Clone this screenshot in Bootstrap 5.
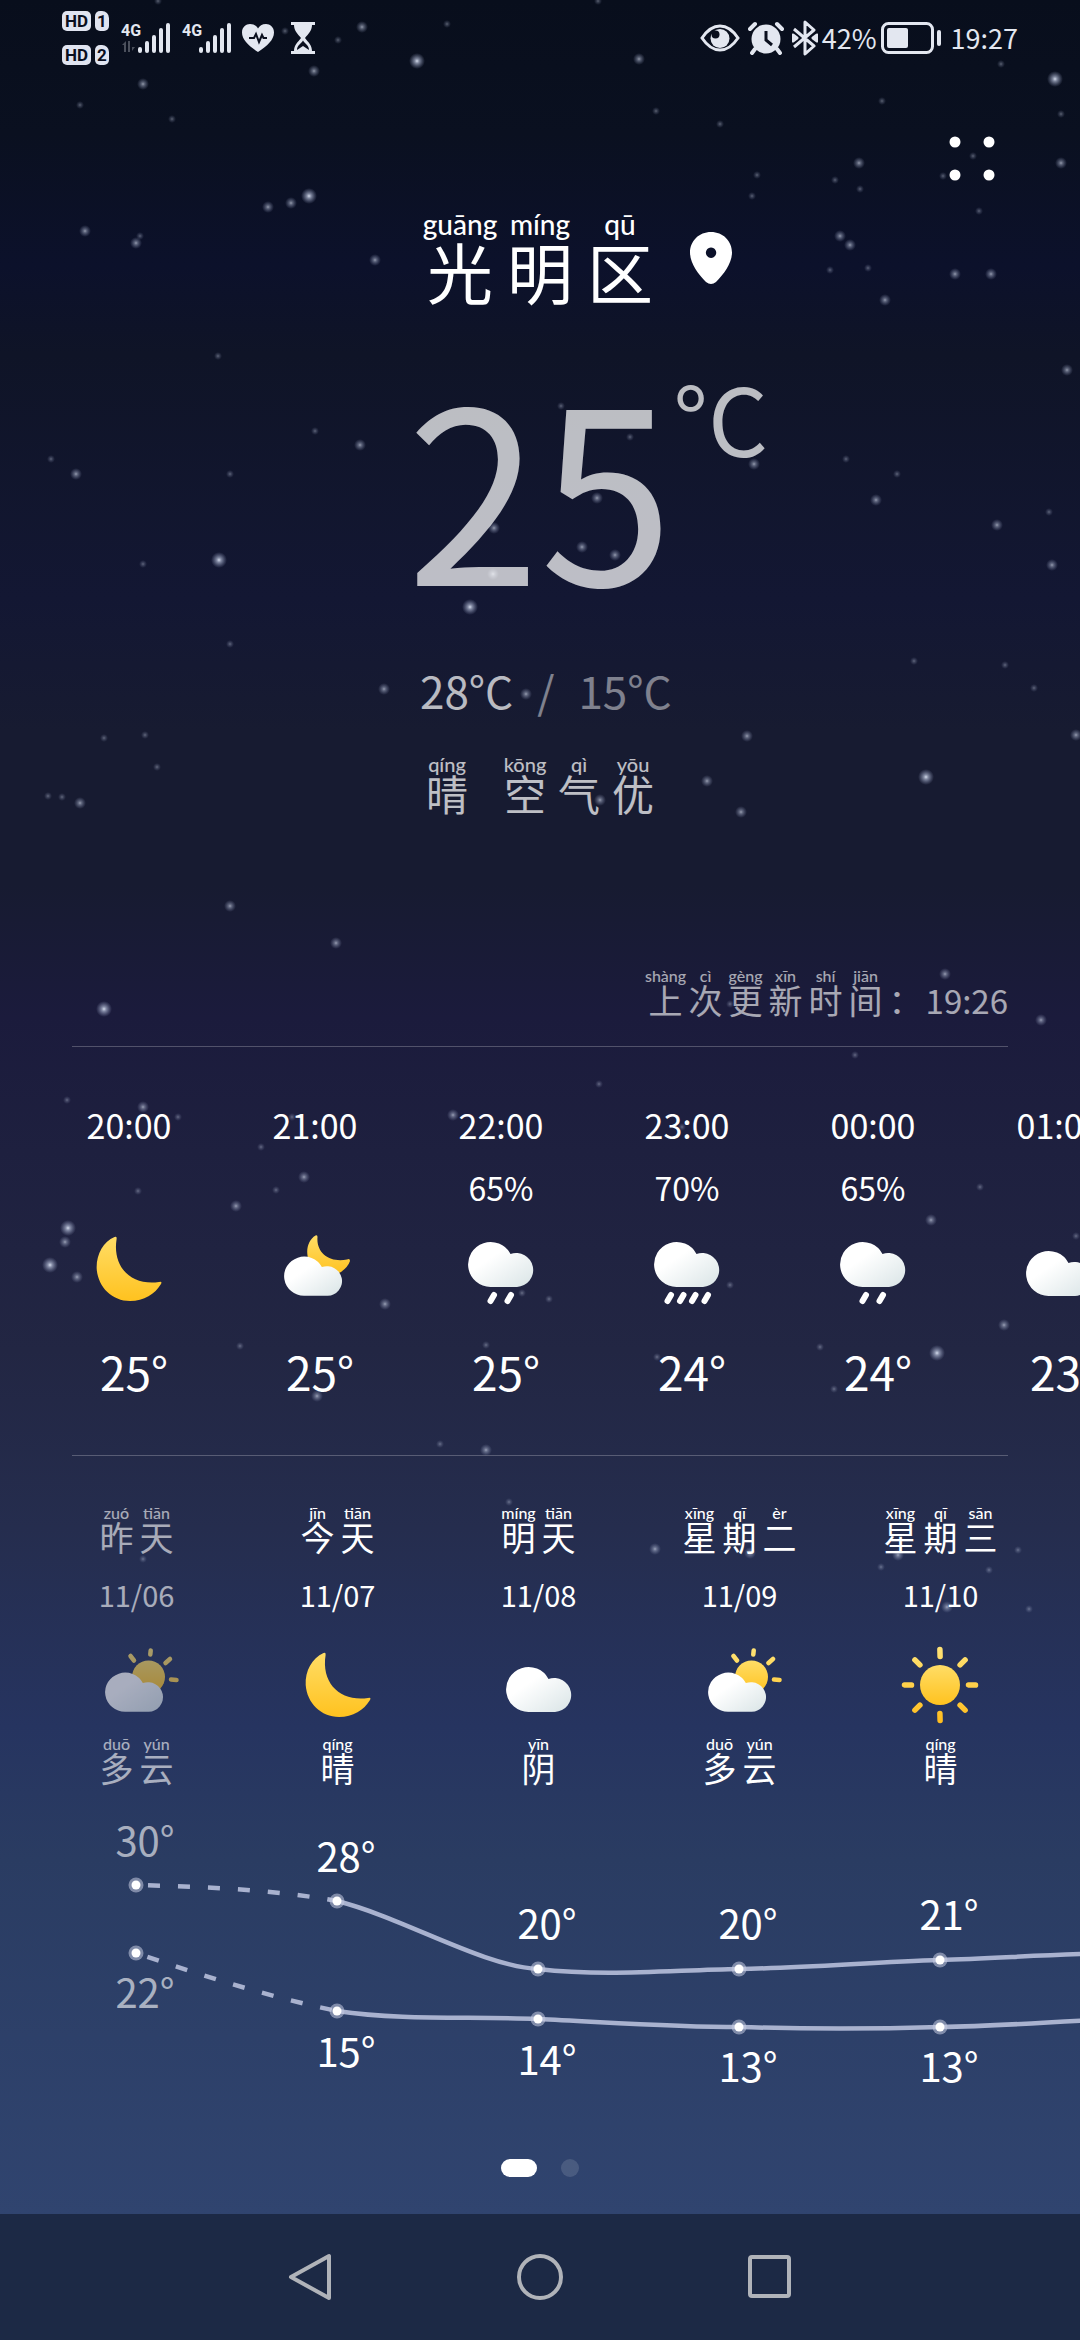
<!DOCTYPE html>
<html lang="zh-CN">
<head>
<meta charset="utf-8">
<meta name="viewport" content="width=device-width, initial-scale=1">
<title>光明区 天气</title>
<link rel="stylesheet" href="https://cdn.jsdelivr.net/npm/bootstrap@5.3.0/dist/css/bootstrap.min.css">
<script src="https://cdn.jsdelivr.net/npm/bootstrap@5.3.0/dist/js/bootstrap.bundle.min.js"></script>
<style>
  body { font-family: "Noto Sans CJK SC", sans-serif; color: #fff; background: #1c2945; }
  .sky { background: linear-gradient(#080e1c 0, #0a1020 6%, #0c112b 12%, #0f1427 16%, #131733 27%, #171b31 33%, #171b31 40%, #1b1b3c 46%, #1e203f 52%, #222643 61%, #252d4e 69%, #263460 78%, #2a3c62 84%, #2d4069 92%, #30446f 100%); overflow: hidden; }
  .starfield { position: absolute; inset: 0; pointer-events: none; }
  .status { height: 76px; padding: 0 62px; color: #e3e7f0; font-size: 27px; line-height: 40px; }
  .tags { gap: 14px; }
  .tag-hd, .tag-sim { background: #e0e4f0; color: #0a0f1e; border-radius: 5px; font-family: Roboto, sans-serif; font-weight: 700; font-size: 17px; line-height: 20px; text-align: center; }
  .tag-hd { width: 29px; }
  .tag-sim { width: 14px; border-top-right-radius: 7px; }
  .net { font-family: Roboto, sans-serif; font-size: 16px; font-weight: 700; }
  .menu-row { padding: 54px 80px 0 0; }
  .plain-btn { background: none; border: 0; padding: 0; color: inherit; display: block; }
  .three { display: grid; grid-template-columns: 1fr auto 1fr; }
  .hanzi { display: flex; flex-direction: column; align-items: center; white-space: nowrap; width: 40px; font-size: 34px; line-height: 32px; }
  .hanzi i { font-family: Lato, sans-serif; font-style: normal; font-weight: 500; font-size: 16px; line-height: 16px; }
  .city { margin-top: 22px; }
  .city .hanzi { width: 80px; font-size: 66px; line-height: 60px; }
  .city .hanzi i { font-size: 28px; line-height: 32px; }
  .pin { margin: 24px 0 0 30px; }
  .now { margin-top: 64px; opacity: .72; font-size: 240px; line-height: 236px; }
  .unit { font-size: 94px; line-height: 104px; }
  .range { margin-top: 62px; font-size: 44px; line-height: 56px; padding-left: 420px; }
  .dim { opacity: .7; }
  .faint { opacity: .45; }
  .summary { margin-top: 36px; padding-left: 420px; opacity: .72; }
  .summary .hanzi { width: 54px; font-size: 42px; line-height: 38px; }
  .summary .hanzi i { font-size: 20px; line-height: 20px; }
  .updated { margin-top: 156px; padding: 0 72px; opacity: .62; font-size: 33px; line-height: 32px; }
  .rule { height: 1px; margin: 0 72px; background: rgba(255,255,255,.24); }
  .updated + .rule { margin-top: 30px; }
  .hours { padding: 58px 0 59px 36px; }
  .hour { flex: 0 0 186px; font-size: 34px; line-height: 40px; }
  .rain-chance { height: 40px; margin: 22px 0 23px; font-size: 32px; }
  .glyph { width: 80px; height: 80px; overflow: visible; display: block; }
  .hour-temp { font-size: 46px; line-height: 50px; margin-top: 36px; padding-left: 10px; }
  .days { padding: 49px 0 0 36px; }
  .day { flex: 0 0 201px; }
  .date { font-size: 29px; line-height: 40px; margin: 21px 0 32px; }
  .cond { margin-top: 10px; }
  .past { opacity: .6; }
  .trend { height: 310px; margin-top: 16px; display: block; font-size: 40px; }
  .pager { margin-top: 49px; gap: 24px; padding-bottom: 37px; }
  .dot-on { width: 36px; height: 18px; border-radius: 9px; background: #fff; }
  .dot-off { width: 18px; height: 18px; border-radius: 50%; background: rgba(255,255,255,.13); }
  .keys { height: 126px; gap: 184px; color: #b0b3b9; }
</style>
</head>
<body class="min-vh-100 d-flex flex-column">

<svg width="0" height="0" class="position-absolute" aria-hidden="true">
  <defs>
    <radialGradient id="glow"><stop offset="0" stop-color="#dfe6f5"/><stop offset=".3" stop-color="#b4bdd6" stop-opacity=".7"/><stop offset="1" stop-color="#8a94b8" stop-opacity="0"/></radialGradient>
    <linearGradient id="gold" x1="0" y1="0" x2="0" y2="1"><stop offset="0" stop-color="#ffdd66"/><stop offset="1" stop-color="#ffc21f"/></linearGradient>
    <linearGradient id="goldRay" gradientUnits="userSpaceOnUse" x1="0" y1="0" x2="0" y2="78"><stop offset="0" stop-color="#ffe478"/><stop offset="1" stop-color="#ffbc1c"/></linearGradient>
    <linearGradient id="fluff" x1="0" y1="0" x2="1" y2="1"><stop offset=".35" stop-color="#fff"/><stop offset="1" stop-color="#d9e4e6"/></linearGradient>
    <path id="puff" fill="url(#fluff)" d="M29.500 57A22.500 22.500 0 1 1 49.500 24A17 17 0 1 1 56 57Z"/>
    <symbol id="w-moon" viewBox="0 0 80 80"><path fill="url(#gold)" d="M25.500 7C14 12 7 25 7.700 39C9 57 23 71 41 71C55 71 66 64 72 54Q73.500 51 70 52C43 56 23 38 27.600 9Q28 6 25.500 7Z"/></symbol>
    <symbol id="w-cloud" viewBox="0 0 80 80"><use href="#puff" y="9"/></symbol>
    <symbol id="w-cloudmoon" viewBox="0 0 80 80"><path fill="url(#gold)" d="M40.500 5.500C33 10 30 21 34 31C42 48 60 46 66 42Q73 37 75 31Q75 28 72 29.500C56 33 41 24 42.500 7Q42.500 4.500 40.500 5.500Z"/><use href="#puff" transform="translate(2.800 16.200) scale(.89 .87)"/></symbol>
    <symbol id="w-rain" viewBox="0 0 80 80"><use href="#puff"/><path d="M33 65L29.500 71M50 65L46.500 71" stroke="#fff" stroke-width="6" stroke-linecap="round"/></symbol>
    <symbol id="w-heavy" viewBox="0 0 80 80"><use href="#puff"/><path d="M24 65L20.500 71M36.500 65L33 71M48.500 65L45 71M61 65L57.500 71" stroke="#fff" stroke-width="6" stroke-linecap="round"/></symbol>
    <symbol id="w-cloudsun" viewBox="0 0 80 80" overflow="visible"><circle cx="51.500" cy="31" r="16.500" fill="url(#gold)"/><path d="M53.700 4.500L53.300 8.500M33.500 10L37 14.500M73 13L68.500 17M74 33.500L79.500 34" stroke="url(#goldRay)" stroke-width="4.500" stroke-linecap="round"/><use href="#puff" transform="translate(1.800 16.200) scale(.89 .87)"/></symbol>
    <symbol id="w-sun" viewBox="0 0 80 80"><circle cx="39" cy="39" r="20" fill="url(#gold)"/><path d="M38.900 3.500L39.100 10.500M38.900 67.500L39.100 74.500M3.500 38.900L10.500 39.100M67.500 38.900L74.500 39.100M13.900 13.900L18.900 18.900M64.100 13.900L59.100 18.900M13.900 64.100L18.900 59.100M64.100 64.100L59.100 59.100" stroke="url(#goldRay)" stroke-width="5.500" stroke-linecap="round"/></symbol>
  </defs>
</svg>

<main class="sky position-relative flex-grow-1">
  <svg class="starfield w-100 h-100" id="stars" aria-hidden="true"></svg>

  <header class="status d-flex align-items-center position-relative">
    <div class="tags d-flex flex-column me-1">
      <div class="d-flex gap-1"><span class="tag-hd">HD</span><span class="tag-sim">1</span></div>
      <div class="d-flex gap-1"><span class="tag-hd">HD</span><span class="tag-sim">2</span></div>
    </div>
    <svg class="ms-2" width="51" height="32" viewBox="0 0 51 32" fill="currentColor" aria-label="4G">
      <text class="net" x="0" y="14">4G</text><path d="M5 19v11h-2v-7h-2zM7 19h2v11h-2zM11 19v10l3-4h-3z" opacity=".3"/>
      <g stroke="currentColor" stroke-width="4" stroke-linecap="round"><path d="M19 27v2M26 21v8M33 15v14M40 8v21M47 3v26"/></g>
    </svg>
    <svg class="ms-2" width="53" height="32" viewBox="-2 0 53 32" fill="currentColor" aria-label="4G">
      <text class="net" x="0" y="14">4G</text>
      <g stroke="currentColor" stroke-width="4" stroke-linecap="round"><path d="M19 27v2M26 21v8M33 15v14M40 8v21M47 3v26"/></g>
    </svg>
    <svg class="ms-2" width="34" height="30" viewBox="0 0 34 30"><path fill="currentColor" d="M17 29C8 23 1 17 1 9.500C1 4 5 1 9 1C13 1 15.500 3 17 5.500C18.500 3 21 1 25 1C29 1 33 4 33 9.500C33 17 26 23 17 29Z"/><path d="M8 15h5l2-4 3 8 3-7 1.500 3H26" fill="none" stroke="#0a0f1e" stroke-width="2"/></svg>
    <svg class="ms-3 me-auto" width="24" height="32" viewBox="0 0 24 32"><path fill="currentColor" d="M0 0h24v3H0zM3 3h18c0 6-4 9-7 13c3 4 7 7 7 13H3c0-6 4-9 7-13C7 12 3 9 3 3zM0 29h24v3H0z"/><path d="M6 28c0-5 4-6 6-9.500c2 3.500 6 4.500 6 9.500l-6-4z" fill="#0a0f1e"/></svg>

    <svg width="40" height="28" viewBox="0 0 40 28"><path d="M2 14C8 5 14 2 20 2S32 5 38 14C32 23 26 26 20 26S8 23 2 14Z" fill="none" stroke="currentColor" stroke-width="3"/><circle cx="20" cy="14.500" r="9.500" fill="currentColor"/><circle cx="15.500" cy="10.500" r="4" fill="#0a0f1e"/></svg>
    <svg class="ms-2" width="36" height="34" viewBox="0 0 36 34"><circle cx="18" cy="18" r="14.500" fill="currentColor"/><path d="M2 8l5-5M34 8l-5-5M7 28l-3 4M29 28l3 4" stroke="currentColor" stroke-width="4" stroke-linecap="round"/><path d="M18 10v9l6 5" fill="none" stroke="#0a0f1e" stroke-width="3"/></svg>
    <svg class="ms-2" width="26" height="36" viewBox="0 0 26 36" fill="none" stroke="currentColor" stroke-width="3"><path d="M2 9L22 26L13 34V2L22 10L2 27M1 15v6l4-3zM25 15v6l-4-3z" stroke-linejoin="round"/></svg>
    <span class="ms-1">42%</span>
    <svg class="ms-1" width="62" height="32" viewBox="0 0 62 32"><rect x="1.500" y="1.500" width="50" height="29" rx="6" fill="none" stroke="currentColor" stroke-width="3"/><rect x="6" y="6" width="21" height="20" rx="2" fill="currentColor"/><rect x="56" y="8" width="4" height="16" rx="2" fill="currentColor"/></svg>
    <time class="ms-2">19:27</time>
  </header>

  <div class="menu-row d-flex justify-content-end position-relative">
    <button class="plain-btn" type="button" aria-label="更多"><svg class="d-block" width="56" height="56" viewBox="0 0 56 56" fill="#fff"><circle cx="11" cy="12" r="5.500"/><circle cx="45" cy="12" r="5.500"/><circle cx="11" cy="45" r="5.500"/><circle cx="45" cy="45" r="5.500"/></svg></button>
  </div>

  <div class="city three position-relative">
    <span></span>
    <h1 class="m-0 d-flex fw-normal"><span class="hanzi"><i>guāng</i>光</span><span class="hanzi"><i>míng</i>明</span><span class="hanzi"><i>qū</i>区</span></h1>
    <svg class="pin" width="42" height="52" viewBox="0 0 42 52"><path fill="#fff" fill-rule="evenodd" d="M21 0C33 0 42 9 42 20.500C42 31 34 42 26 50Q21 54 16 50C8 42 0 31 0 20.500C0 9 9 0 21 0ZM21 15.500a5.200 5.200 0 1 0 .1 0Z"/></svg>
  </div>

  <div class="now three position-relative">
    <span></span><span>25</span><span class="unit">°C</span>
  </div>

  <div class="range d-flex position-relative"><span class="dim">28°C</span><span class="faint ms-4">/</span><span class="faint ms-4">15°C</span></div>

  <div class="summary d-flex position-relative"><span class="hanzi me-4"><i>qíng</i>晴</span><span class="hanzi"><i>kōng</i>空</span><span class="hanzi"><i>qì</i>气</span><span class="hanzi"><i>yōu</i>优</span></div>

  <div class="updated d-flex justify-content-end align-items-end position-relative">
    <span class="hanzi"><i>shàng</i>上</span><span class="hanzi"><i>cì</i>次</span><span class="hanzi"><i>gèng</i>更</span><span class="hanzi"><i>xīn</i>新</span><span class="hanzi"><i>shí</i>时</span><span class="hanzi"><i>jiān</i>间</span><span class="hanzi">：</span><time>19:26</time>
  </div>
  <div class="rule"></div>

  <ul class="hours list-unstyled d-flex m-0 text-center position-relative">
    <li class="hour"><div>20:00</div><div class="rain-chance"></div><svg class="glyph mx-auto"><use href="#w-moon"/></svg><div class="hour-temp">25°</div></li>
    <li class="hour"><div>21:00</div><div class="rain-chance"></div><svg class="glyph mx-auto"><use href="#w-cloudmoon"/></svg><div class="hour-temp">25°</div></li>
    <li class="hour"><div>22:00</div><div class="rain-chance">65%</div><svg class="glyph mx-auto"><use href="#w-rain"/></svg><div class="hour-temp">25°</div></li>
    <li class="hour"><div>23:00</div><div class="rain-chance">70%</div><svg class="glyph mx-auto"><use href="#w-heavy"/></svg><div class="hour-temp">24°</div></li>
    <li class="hour"><div>00:00</div><div class="rain-chance">65%</div><svg class="glyph mx-auto"><use href="#w-rain"/></svg><div class="hour-temp">24°</div></li>
    <li class="hour"><div>01:00</div><div class="rain-chance"></div><svg class="glyph mx-auto"><use href="#w-cloud"/></svg><div class="hour-temp">23°</div></li>
  </ul>
  <div class="rule"></div>

  <ul class="days list-unstyled d-flex m-0 text-center position-relative">
    <li class="day past"><div class="d-flex justify-content-center"><span class="hanzi"><i>zuó</i>昨</span><span class="hanzi"><i>tiān</i>天</span></div><div class="date">11/06</div><svg class="glyph mx-auto"><use href="#w-cloudsun"/></svg><div class="cond d-flex justify-content-center"><span class="hanzi"><i>duō</i>多</span><span class="hanzi"><i>yún</i>云</span></div></li>
    <li class="day"><div class="d-flex justify-content-center"><span class="hanzi"><i>jīn</i>今</span><span class="hanzi"><i>tiān</i>天</span></div><div class="date">11/07</div><svg class="glyph mx-auto"><use href="#w-moon"/></svg><div class="cond d-flex justify-content-center"><span class="hanzi"><i>qíng</i>晴</span></div></li>
    <li class="day"><div class="d-flex justify-content-center"><span class="hanzi"><i>míng</i>明</span><span class="hanzi"><i>tiān</i>天</span></div><div class="date">11/08</div><svg class="glyph mx-auto"><use href="#w-cloud"/></svg><div class="cond d-flex justify-content-center"><span class="hanzi"><i>yīn</i>阴</span></div></li>
    <li class="day"><div class="d-flex justify-content-center"><span class="hanzi"><i>xīng</i>星</span><span class="hanzi"><i>qī</i>期</span><span class="hanzi"><i>èr</i>二</span></div><div class="date">11/09</div><svg class="glyph mx-auto"><use href="#w-cloudsun"/></svg><div class="cond d-flex justify-content-center"><span class="hanzi"><i>duō</i>多</span><span class="hanzi"><i>yún</i>云</span></div></li>
    <li class="day"><div class="d-flex justify-content-center"><span class="hanzi"><i>xīng</i>星</span><span class="hanzi"><i>qī</i>期</span><span class="hanzi"><i>sān</i>三</span></div><div class="date">11/10</div><svg class="glyph mx-auto"><use href="#w-sun"/></svg><div class="cond d-flex justify-content-center"><span class="hanzi"><i>qíng</i>晴</span></div></li>
  </ul>

  <svg class="trend w-100 position-relative" id="trend" fill="none" role="img" aria-label="气温趋势">
    <g stroke="#a9b2cf" stroke-width="4.500">
      <path stroke-dasharray="12 18" stroke-dashoffset="-12" d="M136 85C203 87 270 89 337 101"/>
      <path stroke-dasharray="12 18" stroke-dashoffset="-12" d="M136 153C203 176 270 197 337 211"/>
      <path d="M337 101C404 118 482 166 538 169C605 177 672 170 739 169C806 168 873 162 940 160C1000 158 1060 154 1120 153"/>
      <path d="M337 211C404 221 471 216 538 219C605 222 672 227 739 227C806 229 873 229 940 227C1007 226 1060 221 1120 219"/>
    </g>
  </svg>

  <div class="pager d-flex justify-content-center position-relative"><span class="dot-on"></span><span class="dot-off"></span></div>
</main>

<nav class="keys d-flex justify-content-center align-items-center">
  <button class="plain-btn" type="button" aria-label="返回"><svg class="d-block" width="46" height="50" viewBox="0 0 46 50"><path d="M42 4V46L4 25Z" fill="none" stroke="currentColor" stroke-width="4" stroke-linejoin="round"/></svg></button>
  <button class="plain-btn" type="button" aria-label="主页"><svg class="d-block" width="46" height="50" viewBox="0 0 46 50"><circle cx="23" cy="25" r="21" fill="none" stroke="currentColor" stroke-width="4"/></svg></button>
  <button class="plain-btn" type="button" aria-label="最近任务"><svg class="d-block" width="46" height="50" viewBox="0 0 46 50"><rect x="3" y="5" width="39" height="39" rx="2" fill="none" stroke="currentColor" stroke-width="4"/></svg></button>
</nav>

<script>
  const NS = 'http://www.w3.org/2000/svg';
  const add = (parent, tag, attrs, text) => {
    const el = document.createElementNS(NS, tag);
    for (const k in attrs) el.setAttribute(k, attrs[k]);
    if (text) el.textContent = text;
    parent.appendChild(el);
  };

  // daily points: x, high y, high, high label y, low y, low, low label y
  const days = [
    [136, 85, 30, 56, 153, 22, 208], [337, 101, 28, 72, 211, 15, 267],
    [538, 169, 20, 139, 219, 14, 275], [739, 169, 20, 139, 227, 13, 282],
    [940, 160, 21, 130, 227, 13, 282]
  ];
  const trend = document.getElementById('trend');
  days.forEach(([x, hy, hi, hl, ly, lo, ll], i) => {
    for (const y of [hy, ly]) {
      add(trend, 'circle', { cx: x, cy: y, r: 7.5, fill: '#c4cbe0', 'fill-opacity': .55 });
      add(trend, 'circle', { cx: x, cy: y, r: 4.5, fill: '#fff' });
    }
    const o = i ? 1 : .6;
    add(trend, 'text', { x: x + 9, y: hl, fill: '#fff', 'fill-opacity': o, 'text-anchor': 'middle' }, hi + '°');
    add(trend, 'text', { x: x + 9, y: ll, fill: '#fff', 'fill-opacity': o, 'text-anchor': 'middle' }, lo + '°');
  });

  // stars: x, y, brightness 1-3
  const stars = [
    158,1,1, 285,31,1, 362,27,2, 338,40,1, 447,24,1, 417,61,3, 314,71,2, 143,84,2, 80,105,1, 172,119,1, 598,1,1, 639,59,2,
    1001,64,1, 1055,79,3, 882,101,1, 656,111,1, 720,124,1, 1061,114,1, 859,163,2, 835,180,1, 860,189,1, 973,156,1, 943,176,1,
    1061,163,2, 757,175,1, 752,196,1, 979,211,1, 840,236,2, 850,245,2, 830,270,1, 868,268,1, 955,274,2, 991,274,2, 885,300,2,
    268,207,2, 291,203,2, 309,196,3, 85,231,2, 136,243,2, 140,236,1, 375,260,2, 218,356,1, 315,431,1, 360,445,2, 51,459,1,
    76,474,2, 230,474,1, 219,560,3, 143,564,1, 230,644,1, 1067,370,2, 846,459,1, 876,500,2, 897,474,1, 997,525,2, 1049,512,1,
    1052,565,2, 1005,665,1, 1034,688,1, 1076,735,2, 926,777,3, 914,661,1, 104,738,1, 145,735,1, 157,767,1, 48,796,1, 62,797,1,
    80,803,2, 230,906,2, 336,943,2, 104,1009,3, 561,406,1, 630,437,1, 597,498,2, 494,528,2, 582,547,2, 615,555,2, 470,607,3,
    754,464,2, 493,574,2, 384,689,2, 526,694,2, 747,736,2, 707,781,2, 741,812,2, 600,800,2, 945,974,2, 1041,1020,2, 855,1055,1,
    730,1004,1, 67,1100,1, 143,1107,2, 178,1117,1, 453,1115,2, 292,1117,1, 261,1147,1, 304,1177,2, 276,1190,1, 236,1206,2,
    138,1191,1, 68,1228,3, 65,1242,2, 50,1265,3, 77,1277,2, 385,1304,2, 522,1293,1, 549,1299,1, 240,1346,1, 317,1396,2,
    486,1345,1, 599,1084,1, 682,1127,1, 931,1220,2, 980,1187,1, 1076,1236,1, 730,1285,1, 1004,1325,2, 937,1353,3, 820,1347,1,
    834,1389,1, 657,1357,1, 143,1559,1, 509,1502,1, 523,1604,1, 655,1549,2, 750,1553,2, 898,1555,2, 881,1567,1, 989,1570,1,
    1018,1550,1, 947,1607,2, 1029,1609,1, 440,1444,1, 486,1450,2
  ];
  const field = document.getElementById('stars');
  for (let i = 0; i < stars.length; i += 3) {
    const b = stars[i + 2];
    add(field, 'circle', { cx: stars[i], cy: stars[i + 1], r: 2 + b * 2, fill: 'url(#glow)', opacity: [0, .4, .65, .95][b] });
  }
</script>
</body>
</html>
